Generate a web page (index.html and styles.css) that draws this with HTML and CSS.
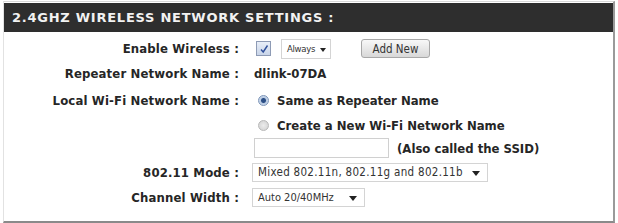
FILE: index.html
```html
<!DOCTYPE html>
<html>
<head>
<meta charset="utf-8">
<link rel="stylesheet" href="styles.css">
</head>
<body>
<div class="box">
  <div class="header">2.4GHZ WIRELESS NETWORK SETTINGS :</div>
  <div class="grid">
    <div class="lbl">Enable Wireless :</div>
    <div class="val">
      <span class="check"><svg width="10" height="10" viewBox="0 0 10 10"><path d="M2 5.5 L4.2 8 L8.5 1.5" fill="none" stroke="#2f4f9a" stroke-width="1.4"/></svg></span>
      <span class="select sel-always">Always<span class="arrow"></span></span>
      <span class="button">Add New</span>
    </div>

    <div class="lbl">Repeater Network Name :</div>
    <div class="val bold">dlink-07DA</div>

    <div class="lbl">Local Wi-Fi Network Name :</div>
    <div class="val bold"><span class="radio on"></span>Same as Repeater Name</div>

    <div class="lbl"></div>
    <div class="val bold"><span class="radio"></span>Create a New Wi-Fi Network Name</div>

    <div class="lbl"></div>
    <div class="val bold"><span class="input"></span>(Also called the SSID)</div>

    <div class="lbl">802.11 Mode :</div>
    <div class="val"><span class="select sel-mode">Mixed 802.11n, 802.11g and 802.11b<span class="arrow"></span></span></div>

    <div class="lbl">Channel Width :</div>
    <div class="val"><span class="select sel-width">Auto 20/40MHz<span class="arrow"></span></span></div>
  </div>
</div>
</body>
</html>
```

FILE: styles.css
```css
html, body {
  margin: 0;
  padding: 0;
  background: #ffffff;
}
body {
  font-family: "DejaVu Sans Condensed", "DejaVu Sans", sans-serif;
  color: #262626;
}
.box {
  margin: 1px 0 0 3px;
  width: 609px;
  height: 218px;
  border-top: 1px solid #d8d8d8;
  border-left: 1px solid #e2e2e2;
  border-right: 2px solid #9a9a9a;
  border-bottom: 2px solid #8a8a8a;
  box-sizing: content-box;
  padding-top: 1px;
}
.header {
  background: #2e2e2e;
  color: #f2f2f2;
  height: 29px;
  line-height: 30px;
  font-family: "DejaVu Sans", sans-serif;
  font-weight: bold;
  font-size: 13px;
  letter-spacing: 0.75px;
  padding-left: 8px;
}
.grid {
  display: grid;
  grid-template-columns: 235px 1fr;
  grid-template-rows: 25px 25px 28px 23px 22px 26px 24px;
  column-gap: 15px;
  padding-top: 4px;
}
.lbl {
  font-weight: bold;
  font-size: 13px;
  letter-spacing: 0.15px;
  text-align: right;
  display: flex;
  align-items: center;
  justify-content: flex-end;
  white-space: nowrap;
}
.val {
  display: flex;
  align-items: center;
  font-size: 13px;
  white-space: nowrap;
}
.bold {
  font-weight: bold;
}
.check {
  width: 13px;
  height: 13px;
  border: 1px solid #8e9bb5;
  background: linear-gradient(#e8eef8, #c8d4e8);
  display: inline-flex;
  align-items: center;
  justify-content: center;
  margin-left: 2px;
  margin-right: 10px;
}
.select {
  display: inline-flex;
  align-items: center;
  height: 19px;
  border: 1px solid #d4d4d4;
  background: #fff;
  font-family: "DejaVu Sans Condensed", sans-serif;
  font-size: 11.5px;
  color: #333;
  padding-left: 5px;
  box-sizing: border-box;
  position: relative;
}
.arrow {
  width: 0;
  height: 0;
  border-left: 4px solid transparent;
  border-right: 4px solid transparent;
  border-top: 5px solid #222;
  position: absolute;
  right: 7px;
  top: 7px;
}
.sel-always {
  width: 50px;
  margin-right: 30px;
  height: 20px;
  font-size: 9.5px;
  letter-spacing: -0.3px;
}
.sel-always .arrow {
  right: 4px;
  border-left-width: 3.5px;
  border-right-width: 3.5px;
  border-top-width: 4px;
  top: 8px;
}
.sel-mode {
  width: 236px;
  margin-left: -2px;
  letter-spacing: 0.3px;
}
.sel-width {
  width: 113px;
  margin-left: -2px;
  font-size: 11px;
}
.button {
  display: inline-flex;
  align-items: center;
  justify-content: center;
  width: 69px;
  height: 19px;
  box-sizing: border-box;
  border: 1px solid #a8a8a8;
  border-radius: 3px;
  background: linear-gradient(#f8f8f8, #d8d8d8);
  font-size: 11.5px;
  color: #333;
}
.radio {
  width: 9px;
  height: 9px;
  border-radius: 50%;
  border: 1px solid #b8b8b8;
  background: radial-gradient(circle, #ececec 0%, #cfcfcf 100%);
  margin-left: 4px;
  margin-right: 8px;
  box-sizing: content-box;
  position: relative;
}
.radio.on {
  border-color: #7d95b8;
  background: radial-gradient(circle, #2c4f86 0, #2c4f86 2px, #b9cbe3 3px, #dbe5f2 100%);
}
.input {
  width: 135px;
  height: 20px;
  border: 1px solid #d0d0d0;
  box-sizing: border-box;
  background: #fff;
  margin-right: 8px;
}
```
